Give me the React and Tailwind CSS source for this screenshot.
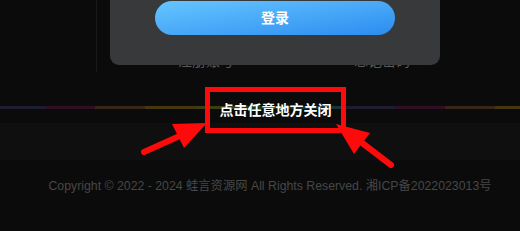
import React from "react";

const stripe = [
  { w: "w-[45px]", c: "bg-[#1e1c30]" },
  { w: "w-[50px]", c: "bg-[#2e1024]" },
  { w: "w-[50px]", c: "bg-[#36261a]" },
  { w: "w-[50px]", c: "bg-[#45360f]" },
  { w: "w-[50px]", c: "bg-[#3b3d12]" },
  { w: "w-[50px]", c: "bg-[#1d3a1c]" },
  { w: "w-[50px]", c: "bg-[#14333a]" },
  { w: "w-[50px]", c: "bg-[#1e1c30]" },
  { w: "w-[50px]", c: "bg-[#2e1024]" },
  { w: "w-[50px]", c: "bg-[#36261a]" },
  { w: "w-[25px]", c: "bg-[#45360f]" },
];

function Arrows() {
  return (
    <svg className="absolute inset-0 pointer-events-none" width="520" height="231" viewBox="0 0 520 231">
      <line x1="144" y1="152" x2="184" y2="134" stroke="#ff0a0a" strokeWidth="6" strokeLinecap="round" />
      <polygon points="207,123 172,124 184,148" fill="#ff0a0a" />
      <line x1="391" y1="165" x2="357" y2="139" stroke="#ff0a0a" strokeWidth="6" strokeLinecap="round" />
      <polygon points="336,124 370,133 354,154" fill="#ff0a0a" />
    </svg>
  );
}

export default function App() {
  return (
    <div className="relative w-[520px] h-[231px] overflow-hidden bg-[#0b0b0b] font-['Liberation_Sans','Noto_Sans_CJK_SC',sans-serif]">
      {/* page behind the modal */}
      <div className="relative h-[106px] flex">
        <div className="ml-[96px] w-px h-[72px] bg-[#191919]" />
        <div className="flex pt-[53px] text-[14px] leading-[16px] text-[#5a5a5a]">
          <span className="ml-[81px]">注册账号</span>
          <span className="ml-[120px]">忘记密码</span>
        </div>
      </div>

      <div className="flex h-[3px]">
        {stripe.map((s, i) => (
          <div key={i} className={`${s.w} ${s.c} h-full`} />
        ))}
      </div>
      <div className="h-[14px]" />
      <div className="h-[37px] bg-[#0f0f0f]" />

      <div className="pt-[19px] pl-[20px] text-center text-[12.3px] leading-[14px] text-[#474747]">
        Copyright © 2022 - 2024 蛙言资源网 All Rights Reserved. 湘ICP备2022023013号
      </div>

      {/* modal */}
      <div className="absolute left-[110px] top-[-12px] w-[330px] h-[77px] rounded-[9px] bg-[#38393b] flex flex-col items-center pt-[13px]">
        <button className="w-[240px] h-[34px] rounded-full bg-gradient-to-br from-[#66c6ff] to-[#2b8cf0] text-white text-[14px] font-bold">
          登录
        </button>
      </div>

      {/* close hint */}
      <div className="absolute left-[205px] top-[87px] w-[141px] h-[46px] border-[5px] border-[#ff0a0a] flex items-center justify-center text-white text-[14px] font-bold">
        点击任意地方关闭
      </div>

      <Arrows />
    </div>
  );
}
